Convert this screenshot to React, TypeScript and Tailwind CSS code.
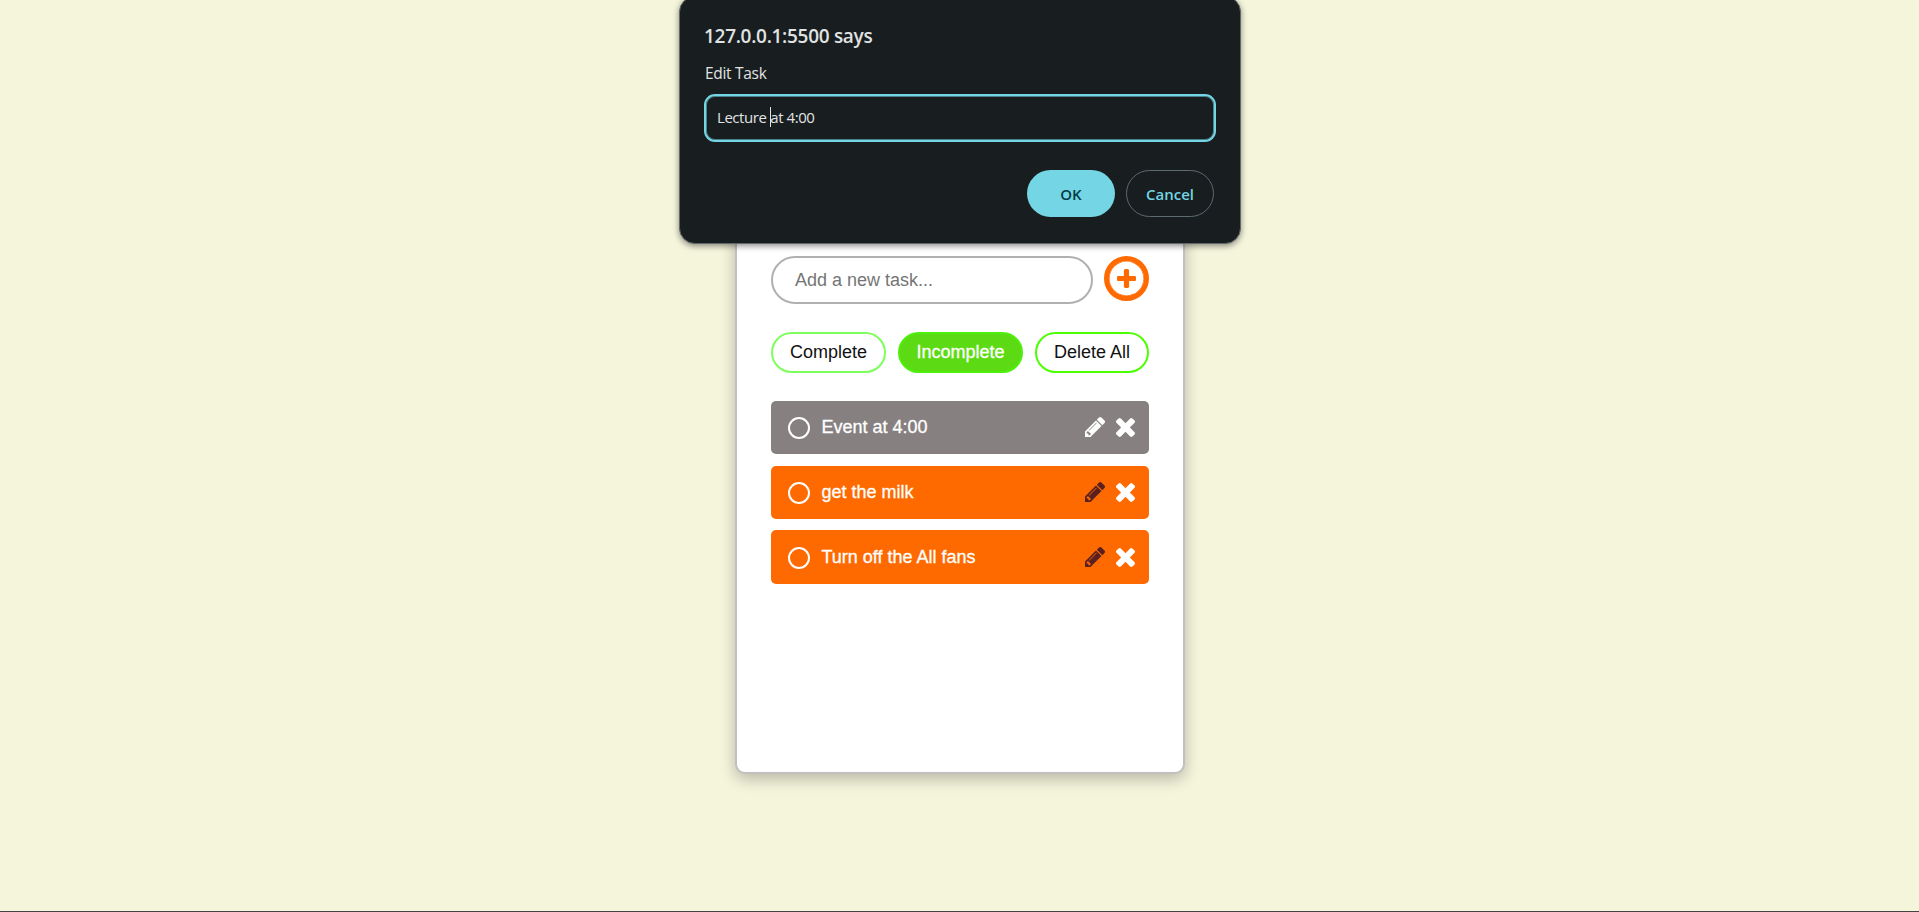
const PENCIL =
  'M491 1536l91-91-235-235-91 91v107h128v128h107zm523-928q0-22-22-22-10 0-17 7l-542 542q-7 7-7 17 0 22 22 22 10 0 17-7l542-542q7-7 7-17zm-54-192l416 416-832 832h-416v-416zm683 96q0 53-37 90l-166 166-416-416 166-165q36-38 90-38 53 0 91 38l235 234q37 39 37 91z';
const CROSS =
  'M1490 1322q0 40-28 68l-136 136q-28 28-68 28t-68-28l-294-294-294 294q-28 28-68 28t-68-28l-136-136q-28-28-28-68t28-68l294-294-294-294q-28-28-28-68t28-68l136-136q28-28 68-28t68 28l294 294 294-294q28-28 68-28t68 28l136 136q28 28 28 68t-28 68l-294 294 294 294q28 28 28 68z';
const PLUS =
  'M1600 736v192q0 40-28 68t-68 28h-416v416q0 40-28 68t-68 28h-192q-40 0-68-28t-28-68v-416h-416q-40 0-68-28t-28-68v-192q0-40 28-68t68-28h416v-416q0-40 28-68t68-28h192q40 0 68 28t28 68v416h416q40 0 68 28t28 68z';

function Icon({ d, box, className }: { d: string; box: string; className: string }) {
  return (
    <svg viewBox={box} fill="currentColor" className={className} aria-hidden="true">
      <path d={d} />
    </svg>
  );
}

type Task = { text: string; row: string; pencil: string };

const tasks: Task[] = [
  { text: 'Event at 4:00', row: 'bg-[#878080]', pencil: 'text-white' },
  { text: 'get the milk', row: 'bg-[#ff6a00]', pencil: 'text-[#5a2020]' },
  { text: 'Turn off the All fans', row: 'bg-[#ff6a00]', pencil: 'text-[#5a2020]' },
];

function TaskRow({ text, row, pencil }: Task) {
  return (
    <li className={`flex h-[53.4px] items-center rounded-[5px] pl-[17px] pr-[14px] text-white ${row}`}>
      <span className="mt-[1.5px] size-[22px] shrink-0 rounded-full border-2 border-white" />
      <span className="ml-3 flex-1 text-[18px] leading-[22px] -mt-[1px] [-webkit-text-stroke:0.3px_white]">{text}</span>
      <Icon d={PENCIL} box="128 149 1515 1515" className={`-mt-px size-5 ${pencil}`} />
      <Icon d={CROSS} box="302 366 1188 1188" className="ml-[11px] size-[19px]" />
    </li>
  );
}

function PromptDialog() {
  return (
    <div className="absolute left-[679px] top-[-4px] h-[248px] w-[562px] rounded-[16px] border border-[#5f686a] bg-[#181d1f] px-[24px] pt-[26px] font-['Open_Sans','Noto_Sans',sans-serif] text-[#e1e3e3] shadow-[0_2px_6px_rgba(0,0,0,0.45)]">
      <h2 className="h-[26px] text-[19px] leading-[26px] font-semibold tracking-[-0.3px]">127.0.0.1:5500 says</h2>
      <p className="mt-[14px] ml-px h-[20px] text-[15.5px] leading-[20px] tracking-[-0.3px]">Edit Task</p>
      <div className="mt-[11px] flex h-[48px] w-[512px] items-center rounded-[11px] border-2 border-[#74d5e4] pb-[2px] pl-[11px] text-[15px] tracking-[-0.45px] shadow-[inset_0_0_0_1px_rgba(116,213,228,0.55)]">
        <span>Lecture&nbsp;</span>
        <span className="ml-[0.5px] -mr-px h-5 w-px bg-[#e1e3e3]" />
        <span>at 4:00</span>
      </div>
      <div className="mt-[28px] flex justify-end gap-[11px] pr-[2px] text-[15px] font-semibold">
        <button className="h-[47px] w-[88px] rounded-full bg-[#74d5e4] pt-px text-[#003c45]">OK</button>
        <button className="h-[47px] w-[88px] rounded-full border border-[#5c6b70] pt-px text-[#74d5e4]">Cancel</button>
      </div>
    </div>
  );
}

export default function App() {
  return (
    <div className="relative flex h-[912px] w-[1919px] flex-col items-center overflow-hidden border-b border-[#444444] bg-[#f5f5dc] font-['Liberation_Sans',Arial,sans-serif]">
      <main className="h-[774px] w-[450px] shrink-0 rounded-[10px] border-2 border-[#c0c0c0] bg-white px-[34px] pt-[254px] shadow-[0_5px_15px_rgba(0,0,0,0.25)]">
        <div className="flex justify-between">
          <div className="flex h-[48px] w-[322px] items-center rounded-full border-2 border-[#b0b0b0] pl-[22.5px] text-[18px] text-[#757575]">
            Add a new task...
          </div>
          <button className="flex size-[45px] items-center justify-center rounded-full border-[5px] border-[#ff6a00] pl-[0.5px] text-[#ff6a00] shadow-[inset_0_0_0_0.6px_#ff6a00]">
            <Icon d={PLUS} box="192 128 1408 1408" className="-mt-px size-[19px]" />
          </button>
        </div>
        <div className="mt-[28px] flex gap-3 text-[18px] text-[#111111]">
          <button className="h-[41px] w-[115px] rounded-full border-2 border-[#7dff5c] pl-px">Complete</button>
          <button className="h-[41px] w-[125px] rounded-full border-2 border-[#4cf00a] bg-[#5cdb14] pl-px text-white [-webkit-text-stroke:0.3px_white]">
            Incomplete
          </button>
          <button className="h-[41px] w-[114px] rounded-full border-2 border-[#4cff00] pl-px">Delete All</button>
        </div>
        <ul className="mt-[28px] flex flex-col gap-[11.3px]">
          {tasks.map((task) => (
            <TaskRow key={task.text} {...task} />
          ))}
        </ul>
      </main>
      <PromptDialog />
    </div>
  );
}
